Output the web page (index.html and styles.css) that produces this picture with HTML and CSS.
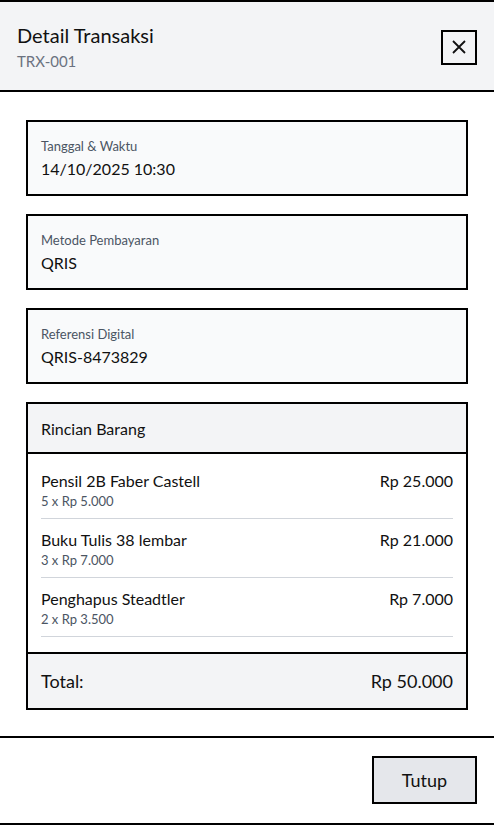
FILE: index.html
```html
<!DOCTYPE html>
<html>
<head>
    <meta charset="UTF-8">
    <title>Detail Transaksi</title>
    <link rel="stylesheet" href="styles.css">
</head>
<body>
    <div class="modal">
        <!-- Header -->
        <div class="modal-header">
            <div>
                <h2 class="modal-title">Detail Transaksi</h2>
                <div class="modal-sub">TRX-001</div>
            </div>
            <button class="close-btn" aria-label="Tutup">
                <svg width="16" height="16" viewBox="0 0 16 16">
                    <path d="M2 2 L14 14 M14 2 L2 14" stroke="#111" stroke-width="1.8" fill="none"/>
                </svg>
            </button>
        </div>

        <div class="modal-body">
            <div class="info-card">
                <div class="info-label">Tanggal &amp; Waktu</div>
                <div class="info-value">14/10/2025 10:30</div>
            </div>

            <div class="info-card">
                <div class="info-label">Metode Pembayaran</div>
                <div class="info-value">QRIS</div>
            </div>

            <div class="info-card">
                <div class="info-label">Referensi Digital</div>
                <div class="info-value">QRIS-8473829</div>
            </div>

            <!-- Rincian -->
            <div class="items-card">
                <div class="items-head">Rincian Barang</div>
                <div class="items-list">
                    <div class="item-row">
                        <div>
                            <div class="item-name">Pensil 2B Faber Castell</div>
                            <div class="item-qty">5 x Rp 5.000</div>
                        </div>
                        <div class="item-price">Rp 25.000</div>
                    </div>
                    <div class="item-row">
                        <div>
                            <div class="item-name">Buku Tulis 38 lembar</div>
                            <div class="item-qty">3 x Rp 7.000</div>
                        </div>
                        <div class="item-price">Rp 21.000</div>
                    </div>
                    <div class="item-row">
                        <div>
                            <div class="item-name">Penghapus Steadtler</div>
                            <div class="item-qty">2 x Rp 3.500</div>
                        </div>
                        <div class="item-price">Rp 7.000</div>
                    </div>
                </div>
                <div class="items-total">
                    <span>Total:</span>
                    <span>Rp 50.000</span>
                </div>
            </div>
        </div>

        <div class="modal-footer">
            <button class="btn-close">Tutup</button>
        </div>
    </div>
</body>
</html>
```

FILE: styles.css
```css
* {
    box-sizing: border-box;
}

body {
    margin: 0;
    font-family: "Segoe UI", Lato, "Noto Sans", sans-serif;
    color: #111;
    background-color: #fff;
}

.modal {
    height: 825px;
    border-top: 2px solid #000;
    border-bottom: 2px solid #000;
    display: flex;
    flex-direction: column;
}

.modal-header {
    height: 90px;
    display: flex;
    justify-content: space-between;
    align-items: center;
    padding: 0 17px;
    background-color: #f3f4f6;
    border-bottom: 2px solid #000;
}

.modal-title {
    margin: 0;
    font-size: 20px;
    font-weight: normal;
    line-height: 28px;
}

.modal-sub {
    margin-top: 2px;
    font-size: 15px;
    color: #6b7280;
    line-height: 20px;
}

.close-btn {
    width: 36px;
    height: 35px;
    margin-top: 2px;
    padding: 0;
    border: 2px solid #000;
    background-color: #f3f4f6;
    display: flex;
    align-items: center;
    justify-content: center;
    cursor: pointer;
}

.modal-body {
    flex: 1;
    padding: 28px 26px 0;
    display: flex;
    flex-direction: column;
    gap: 18px;
}

.info-card {
    border: 2px solid #000;
    background-color: #f9fafb;
    padding: 14px 13px 12px;
}

.info-label {
    font-size: 13px;
    color: #4b5563;
    line-height: 20px;
}

.info-value {
    font-size: 16px;
    line-height: 26px;
}

.items-card {
    border: 2px solid #000;
}

.items-head {
    height: 50px;
    display: flex;
    align-items: center;
    padding: 0 13px;
    font-size: 16px;
    background-color: #f3f4f6;
    border-bottom: 2px solid #000;
}

.items-list {
    padding: 6px 13px 15px;
}

.item-row {
    display: flex;
    justify-content: space-between;
    align-items: flex-start;
    padding: 10px 0 7px;
    border-bottom: 1px solid #d1d5db;
}

.item-name {
    font-size: 16px;
    line-height: 22px;
}

.item-qty {
    font-size: 13px;
    color: #4b5563;
    line-height: 19px;
}

.item-price {
    font-size: 16px;
    line-height: 22px;
}

.items-total {
    height: 56px;
    display: flex;
    justify-content: space-between;
    align-items: center;
    padding: 0 13px;
    font-size: 18px;
    background-color: #f3f4f6;
    border-top: 2px solid #000;
}

.modal-footer {
    height: 87px;
    border-top: 2px solid #000;
    display: flex;
    justify-content: flex-end;
    align-items: center;
    padding: 0 17px 2px;
}

.btn-close {
    width: 105px;
    height: 48px;
    font-family: inherit;
    font-size: 18px;
    color: #111;
    background-color: #e5e7eb;
    border: 2px solid #000;
    cursor: pointer;
}
```
